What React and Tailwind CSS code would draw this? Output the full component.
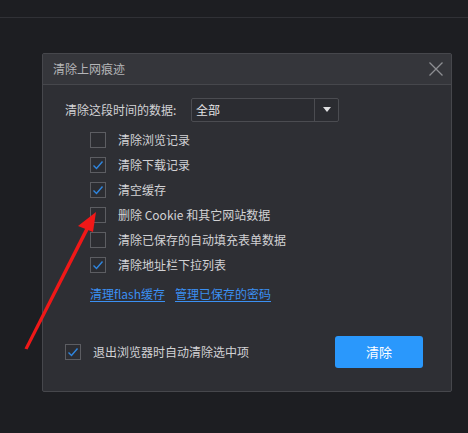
import React from 'react';

const font = { fontFamily: '"Noto Sans CJK SC", "Liberation Sans", sans-serif' };

const items = [
  { label: '清除浏览记录', checked: false },
  { label: '清除下载记录', checked: true },
  { label: '清空缓存', checked: true },
  { label: '删除 Cookie 和其它网站数据', checked: false },
  { label: '清除已保存的自动填充表单数据', checked: false },
  { label: '清除地址栏下拉列表', checked: true },
];

function Check({ checked }) {
  return (
    <span className="w-4 h-4 shrink-0 border border-[#5c5d62] bg-[#2c2d32] flex items-center justify-center">
      {checked && (
        <svg width="12" height="10" viewBox="0 0 12 10">
          <path d="M1.5 5.5 L4.5 8.5 L10.5 1.5" fill="none" stroke="#2f86e0" strokeWidth="1.4" />
        </svg>
      )}
    </span>
  );
}

export default function App() {
  return (
    <div className="relative w-[468px] h-[433px] bg-[#1d1e22] overflow-hidden text-[12px] text-[#d2d2d4]" style={font}>
      {/* top strip */}
      <div className="h-[18px] border-b border-[#303136]" />

      {/* dialog */}
      <div className="ml-[42px] mt-[35px] w-[410px] h-[339px] bg-[#2e2f34] border border-[#46474c] rounded-[2px] flex flex-col">
        <div className="h-[31px] bg-[#35363b] border-b border-[#46474c] flex items-center justify-between pl-[10px] pr-[8px]">
          <span className="text-[#b4b5b8] text-[12px]">清除上网痕迹</span>
          <svg width="14" height="14" viewBox="0 0 14 14">
            <path d="M0.5 0.5 L13.5 13.5 M13.5 0.5 L0.5 13.5" stroke="#8d8e92" strokeWidth="1.3" />
          </svg>
        </div>

        <div className="flex flex-col pl-[22px] pt-[13px]">
          {/* range select */}
          <div className="flex items-center h-[24px]">
            <span className="w-[126px]">清除这段时间的数据:</span>
            <div className="w-[148px] h-[24px] border border-[#4b4c51] rounded-[2px] flex bg-[#2b2c31]">
              <span className="flex-1 flex items-center pl-[4px] text-[#e4e4e6]">全部</span>
              <span className="w-[24px] border-l border-[#4b4c51] flex items-center justify-center">
                <svg width="8" height="6" viewBox="0 0 8 6">
                  <path d="M0 0 H8 L4 5 Z" fill="#e0e0e2" />
                </svg>
              </span>
            </div>
          </div>

          {/* options */}
          <div className="flex flex-col mt-[5px] pl-[25px]">
            {items.map((it) => (
              <div key={it.label} className="h-[25px] flex items-center gap-[12px]">
                <Check checked={it.checked} />
                <span>{it.label}</span>
              </div>
            ))}
          </div>

          <div className="flex gap-[10px] pl-[25px] mt-[8px] text-[#3b90f2] underline underline-offset-2">
            <span>清理flash缓存</span>
            <span>管理已保存的密码</span>
          </div>
        </div>

        {/* footer */}
        <div className="mt-auto mb-[23px] flex items-center justify-between pl-[22px] pr-[28px]">
          <div className="flex items-center gap-[12px]">
            <Check checked />
            <span>退出浏览器时自动清除选中项</span>
          </div>
          <button className="w-[88px] h-[32px] rounded-[3px] bg-[#2a98fc] text-white text-[13px]">清除</button>
        </div>
      </div>

      {/* annotation arrow */}
      <svg className="absolute left-0 top-0 pointer-events-none" width="468" height="433">
        <path d="M24.5 348.5 L27.5 349.5 L89 229 L86 227 Z" fill="#f01818" />
        <path d="M96 212 L78 226 L93 232 Z" fill="#f01818" />
      </svg>
    </div>
  );
}
